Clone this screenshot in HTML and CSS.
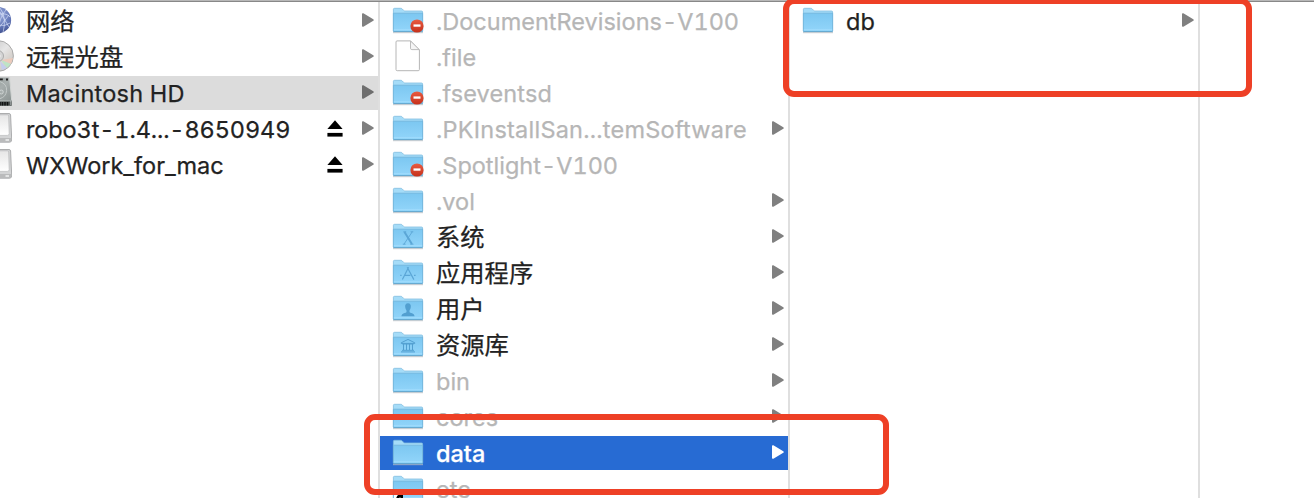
FILE: index.html
```html
<!DOCTYPE html>
<html lang="zh-CN">
<head>
<meta charset="utf-8">
<title>Macintosh HD</title>
<link rel="stylesheet" href="styles.css">
</head>
<body>
<svg class="defs" aria-hidden="true">
  <defs>
    <linearGradient id="gFront" x1="0" y1="0" x2="0" y2="1"><stop offset="0" stop-color="#7cc7f1"/><stop offset="1" stop-color="#92d5fa"/></linearGradient>
    <linearGradient id="gRed" x1="0" y1="0" x2="0" y2="1"><stop offset="0" stop-color="#e95c41"/><stop offset="1" stop-color="#c5301b"/></linearGradient>
    <linearGradient id="gDrive" x1="0" y1="0" x2="0" y2="1"><stop offset="0" stop-color="#e6e6e6"/><stop offset="1" stop-color="#fff"/></linearGradient>
    <linearGradient id="gHd" x1="0" y1="0" x2="1" y2="1"><stop offset="0" stop-color="#7d8785"/><stop offset=".5" stop-color="#a8afae"/><stop offset="1" stop-color="#858d8c"/></linearGradient>
    <linearGradient id="gDisc" x1="0" y1="0" x2="1" y2="1"><stop offset="0" stop-color="#bdbdbd"/><stop offset=".5" stop-color="#e6e6e6"/><stop offset=".68" stop-color="#d9d5d1"/><stop offset="1" stop-color="#c0c0c0"/></linearGradient>
    <radialGradient id="gGlobe" cx=".55" cy=".3" r=".8"><stop offset="0" stop-color="#97a8da"/><stop offset=".55" stop-color="#6478b8"/><stop offset="1" stop-color="#33417f"/></radialGradient>
    <symbol id="folder" viewBox="0 0 32 28">
      <path d="M1 25.6H31" stroke="#b9bec2" stroke-width="1.2" opacity=".7"/>
      <path d="M1.4 24V2.3Q1.4 1.3 2.5 1.3H8.6Q9.6 1.3 10.2 1.9L11.6 3.4Q12.1 4 13 4H29.5Q30.6 4 30.6 5V24Z" fill="#a5dcf8" stroke="#80bddf" stroke-width=".8"/>
      <path d="M1.4 6.2H30.6V23.6Q30.6 24.5 29.7 24.5H2.3Q1.4 24.5 1.4 23.6Z" fill="url(#gFront)" stroke="#70b3d9" stroke-width=".8"/>
      <path d="M1.8 22.6H30.2" stroke="#a2dcfb" stroke-width=".8"/>
      <path d="M1.2 24.6H30.8" stroke="#5fa3cb" stroke-width=".8"/>
    </symbol>
    <symbol id="deny" viewBox="0 0 14 14">
      <circle cx="7" cy="7" r="6.6" fill="url(#gRed)"/><rect x="3.5" y="5.4" width="7" height="2.3" fill="#fff"/>
    </symbol>
    <symbol id="arrow" viewBox="0 0 12 14">
      <path d="M0 1Q0 0 1.2.3 1.8.4 2.6.9L11.3 6.2Q12.3 7 11.3 7.8L2.6 13.1Q1.8 13.6 1.2 13.7 0 14 0 13Z" fill="currentColor"/>
    </symbol>
    <symbol id="eject" viewBox="0 0 16 17">
      <path d="M8 .2 15.6 9H.4Z"/><path d="M.4 12.9H15.6V16.6H.4Z"/>
    </symbol>
    <symbol id="drive" viewBox="0 0 32 32">
      <path d="M2 1.5H29Q30.4 1.5 30.6 3L31.6 25V28Q31.6 30.2 29.5 30.2H0V1.5Z" fill="#d3d4d5" stroke="#9c9d9e" stroke-width=".8"/>
      <path d="M0 2.8H27.5Q28.6 2.8 28.7 4L29.2 21.5Q29.2 23.4 27.4 23.4H0Z" fill="url(#gDrive)" stroke="#b8b9ba" stroke-width=".7"/>
      <path d="M0 26H31.4V28Q31.4 30 29.4 30H0Z" fill="#babbbc"/>
      <path d="M25.5 28H29" stroke="#fff" stroke-width="1.2"/>
    </symbol>
  </defs>
</svg>
<main class="browser">
  <section class="column volumes">
    <div class="row"><svg class="side-icon" viewBox="0 0 32 32"><circle cx="17.8" cy="16.2" r="13.3" fill="url(#gGlobe)"/><path d="M20 4Q27 13 23 29M26 6Q19 13 18 29M20 10Q27 9 30 13M18 21Q25 23 30 19M20 8L29 23M18 25L29 11" fill="none" stroke="#dce5fb" stroke-width="1" opacity=".65"/></svg><span class="name zh">网络</span><svg class="arrow"><use href="#arrow"/></svg></div>
    <div class="row"><svg class="side-icon disc" viewBox="0 0 32 32"><circle cx="16" cy="16" r="15.4" fill="url(#gDisc)" stroke="#a3a3a3" stroke-width=".9"/><path d="M19 20 31 18 29 24Z" fill="#eccabb"/><path d="M19 20 29 24 25 28Z" fill="#bee4c5"/><path d="M18 21 25 28 20 30Z" fill="#c4cdec"/><circle cx="16" cy="16" r="5.5" fill="#d5d5d5" stroke="#ababab"/><circle cx="16" cy="16" r="2.4" fill="#fff"/></svg><span class="name zh">远程光盘</span><svg class="arrow"><use href="#arrow"/></svg></div>
    <div class="row current"><svg class="side-icon" viewBox="0 0 32 32"><path d="M0 1.5H29.6L31.7 24V29.5H0Z" fill="url(#gHd)"/><path d="M29.6 1.5 31.7 24" stroke="#d3d6d5" stroke-width="1"/><path d="M20 5.6Q27 8 26.6 14.5 26 21 20 22.6" fill="none" stroke="#c4cac9" stroke-width="1"/><circle cx="21.3" cy="16" r="2" fill="#a8afae" stroke="#dce1e0" stroke-width=".7"/><path d="M19 3.3H22.8M26 3.5H28" stroke="#222" stroke-width="1.8"/><path d="M0 25H31.7V29.7H0Z" fill="#4c5251"/><path d="M20 26V29.4M22.5 26V29.4M25 26V29.4M27.5 26V29.4" stroke="#0f1111" stroke-width="1.5"/><path d="M0 25H31.5M30.8 25V29" stroke="#c2c7c6" stroke-width=".8"/></svg><span class="name mac">Macintosh HD</span><svg class="arrow"><use href="#arrow"/></svg></div>
    <div class="row"><svg class="side-icon"><use href="#drive"/></svg><span class="name robo">robo3t-1.4...-8650949</span><svg class="eject"><use href="#eject"/></svg><svg class="arrow"><use href="#arrow"/></svg></div>
    <div class="row"><svg class="side-icon"><use href="#drive"/></svg><span class="name">WXWork_for_mac</span><svg class="eject"><use href="#eject"/></svg><svg class="arrow"><use href="#arrow"/></svg></div>
  </section>
  <section class="column files">
    <div class="row hidden"><span class="icon"><svg class="folder"><use href="#folder"/></svg><svg class="deny"><use href="#deny"/></svg></span><span class="name revisions">.DocumentRevisions-V100</span></div>
    <div class="row hidden"><span class="icon"><svg class="document" viewBox="0 0 26 32"><path d="M2 .9H15.5L24.4 9.8V29.5Q24.4 30.7 23.2 30.7H2.2Q1 30.7 1 29.5V2Q1 .9 2 .9Z" fill="#fff" stroke="#b6b6b6" stroke-width="1"/><path d="M15.5 1V8.2Q15.5 9.6 16.8 9.6H24.2Z" fill="#f5f5f5" stroke="#b6b6b6" stroke-width=".9"/></svg></span><span class="name">.file</span></div>
    <div class="row hidden"><span class="icon"><svg class="folder"><use href="#folder"/></svg><svg class="deny"><use href="#deny"/></svg></span><span class="name events">.fseventsd</span></div>
    <div class="row hidden"><span class="icon"><svg class="folder"><use href="#folder"/></svg></span><span class="name sandbox">.PKInstallSan...temSoftware</span><svg class="arrow"><use href="#arrow"/></svg></div>
    <div class="row hidden"><span class="icon"><svg class="folder"><use href="#folder"/></svg><svg class="deny"><use href="#deny"/></svg></span><span class="name">.Spotlight-V100</span></div>
    <div class="row hidden"><span class="icon"><svg class="folder"><use href="#folder"/></svg></span><span class="name">.vol</span><svg class="arrow"><use href="#arrow"/></svg></div>
    <div class="row"><span class="icon"><svg class="folder" viewBox="0 0 32 28"><use href="#folder" width="32" height="28"/><path d="M11.3 8.8H14.2M18.6 8.8H21.3M10.8 21.2H13.6M18.2 21.2H21.5M20.2 8.9 12 21.1" fill="none" stroke="#5ba6d6" stroke-width=".9"/><path d="M12.5 8.9 19.9 21.1" stroke="#5ba6d6" stroke-width="2"/></svg></span><span class="name zh">系统</span><svg class="arrow"><use href="#arrow"/></svg></div>
    <div class="row"><span class="icon"><svg class="folder" viewBox="0 0 32 28"><use href="#folder" width="32" height="28"/><path d="M15.2 8.2 21.9 20.6M16.6 8.2 10.4 20.4M8.2 16.4H9.6M12.2 16.4H18.4M22 16.4H23.6" fill="none" stroke="#5ba6d6" stroke-width="1.2"/></svg></span><span class="name zh">应用程序</span><svg class="arrow"><use href="#arrow"/></svg></div>
    <div class="row"><span class="icon"><svg class="folder" viewBox="0 0 32 28"><use href="#folder" width="32" height="28"/><path d="M16 8.2C13.7 8.2 12.9 10 13.2 12 13.5 13.8 14 14.8 14.5 15.4V17C14 18.2 9.7 18 9.4 21.2H22.6C22.3 18 18 18.2 17.5 17V15.4C18 14.8 18.5 13.8 18.8 12 19.1 10 18.3 8.2 16 8.2Z" fill="#529fd0"/></svg></span><span class="name zh">用户</span><svg class="arrow"><use href="#arrow"/></svg></div>
    <div class="row"><span class="icon"><svg class="folder" viewBox="0 0 32 28"><use href="#folder" width="32" height="28"/><path d="M9.2 11.8 16 8.4 22.8 11.8V12.4H9.2ZM10.3 13H21.7M11.5 13V19M14.5 13V19M17.5 13V19M20.5 13V19M10 19.3H22M9 20.9H23" fill="none" stroke="#529fd0" stroke-width="1"/></svg></span><span class="name zh">资源库</span><svg class="arrow"><use href="#arrow"/></svg></div>
    <div class="row hidden"><span class="icon"><svg class="folder"><use href="#folder"/></svg></span><span class="name">bin</span><svg class="arrow"><use href="#arrow"/></svg></div>
    <div class="row hidden"><span class="icon"><svg class="folder"><use href="#folder"/></svg></span><span class="name">cores</span><svg class="arrow"><use href="#arrow"/></svg></div>
    <div class="row selected"><span class="icon"><svg class="folder"><use href="#folder"/></svg></span><span class="name">data</span><svg class="arrow"><use href="#arrow"/></svg></div>
    <div class="row hidden"><span class="icon"><svg class="folder"><use href="#folder"/></svg><svg class="alias" viewBox="0 0 12 12"><rect width="8" height="12" rx="1" fill="#fff"/><path d="M2 11Q1.5 5 5 3.6V1.5L9 1.5V8L6 6.5Q4 7 2 11Z"/></svg></span><span class="name">etc</span></div>
  </section>
  <section class="column files">
    <div class="row"><span class="icon"><svg class="folder"><use href="#folder"/></svg></span><span class="name">db</span><svg class="arrow"><use href="#arrow"/></svg></div>
  </section>
</main>
<div class="mark mark-db"></div>
<div class="mark mark-data"></div>
</body>
</html>
```
FILE: styles.css
```css
* { box-sizing: border-box; }
body { margin: 0; width: 1314px; height: 498px; overflow: hidden; position: relative; background: #fff; color: #222; font-family: Inter, "Noto Sans CJK SC", sans-serif; font-size: 23.5px; }
.defs { position: absolute; width: 0; height: 0; }
.browser { display: flex; height: 498px; border-top: 1px solid #b8b8b8; box-shadow: inset 0 1px #888; }
.column { display: flex; flex-direction: column; flex: none; gap: 2px; height: 498px; margin-top: 1px; padding-top: 2px; border-right: 2px solid #dfdfdf; background-clip: padding-box; overflow: hidden; }
.volumes { width: 380px; }
.files { width: 410px; }
.row { display: flex; align-items: center; flex: none; height: 34px; padding-right: 4px; line-height: 34px; white-space: nowrap; }
.files .row { padding-left: 12px; }
.name { flex: 1; min-width: 0; padding-top: 1px; font-variant-numeric: tabular-nums; -webkit-text-stroke: .25px currentColor; }
.zh { font-size: 24.3px; padding: 0 0 1px; }
.mac { letter-spacing: .22px; }
.robo { letter-spacing: -.12px; }
.revisions { letter-spacing: 0; }
.events { letter-spacing: .12px; }
.sandbox { letter-spacing: .23px; }
.hidden { color: #b6b6b6; }
.current { background: #dcdcdc; }
.current .arrow { color: #6e6e6e; }
.selected { background: #276bd3; color: #fff; font-weight: 500; }
.arrow { flex: none; width: 12px; height: 14px; color: #808080; margin-bottom: 2px; }
.selected .arrow { color: #fff; }
.eject { flex: none; width: 16px; height: 17px; margin-right: 19px; margin-bottom: 1px; }
.side-icon { flex: none; width: 32px; height: 32px; margin: 0 14px 2px -20px; }
.disc { margin-left: -18px; margin-right: 12px; }
.icon { position: relative; display: flex; justify-content: center; flex: none; width: 32px; margin-right: 12px; }
.folder { display: block; width: 32px; height: 28px; }
.document { display: block; width: 26px; height: 32px; margin-bottom: 2px; }
.deny { position: absolute; right: 0; bottom: 2px; width: 14px; height: 14px; }
.alias { position: absolute; left: 2px; bottom: 0; width: 12px; height: 12px; }
.mark { position: absolute; border: 6px solid #ee4026; border-radius: 11px; }
.mark-db { left: 783px; top: -2px; width: 469px; height: 99px; }
.mark-data { left: 364px; top: 414px; width: 525px; height: 80.5px; }
```
